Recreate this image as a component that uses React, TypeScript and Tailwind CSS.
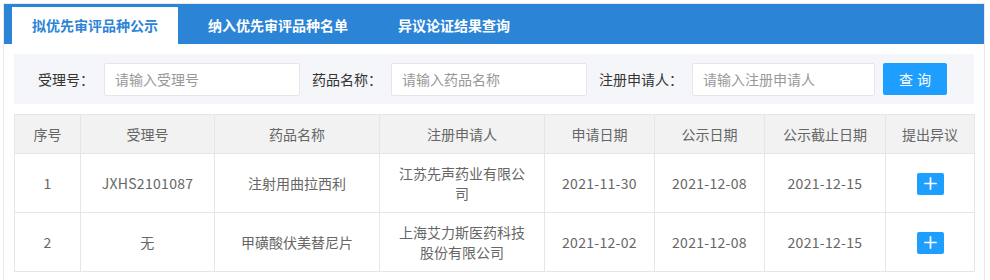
import { Plus } from "lucide-react";

const tabs = ["拟优先审评品种公示", "纳入优先审评品种名单", "异议论证结果查询"];

const columns = [
    { title: "序号", width: 66 },
    { title: "受理号", width: 134 },
    { title: "药品名称", width: 165 },
    { title: "注册申请人", width: 165 },
    { title: "申请日期", width: 110 },
    { title: "公示日期", width: 110 },
    { title: "公示截止日期", width: 121 },
    { title: "提出异议", width: 89 },
];

const rows = [
    { no: 1, code: "JXHS2101087", name: "注射用曲拉西利", applicant: "江苏先声药业有限公司", applyDate: "2021-11-30", pubDate: "2021-12-08", endDate: "2021-12-15" },
    { no: 2, code: "无", name: "甲磺酸伏美替尼片", applicant: "上海艾力斯医药科技股份有限公司", applyDate: "2021-12-02", pubDate: "2021-12-08", endDate: "2021-12-15" },
];

const App = () => {
    return (
        <div className="min-h-screen bg-white pl-[3px] pt-[3px]" style={{ fontFamily: '"Noto Sans CJK SC", "Noto Sans", sans-serif' }}>
            <div className="w-[982px] border border-[#e8e8e8] pb-[8px]">
                {/* Tabs */}
                <div className="h-[40px] bg-[#2b84d6] flex items-end pl-[8px] gap-[10px]">
                    {tabs.map((tab, i) => (
                        <div
                            key={tab}
                            className={
                                i === 0
                                    ? "h-[37px] px-5 flex items-center bg-white text-[#2b84d6] text-[14px] font-bold"
                                    : "h-[37px] px-5 flex items-center text-white text-[14px] font-bold"
                            }
                        >
                            {tab}
                        </div>
                    ))}
                </div>

                <div className="px-[10px] pt-[10px]">
                    {/* Filters */}
                    <div className="h-[50px] bg-[#f5f6f9] flex items-center pl-[24px] text-[14px] text-[#333]">
                        <span className="w-[66px]">受理号：</span>
                        <input className="w-[196px] h-[33px] bg-white border border-[#e6e6e6] rounded-[2px] px-[10px] outline-none placeholder:text-[#999]" placeholder="请输入受理号" />
                        <span className="ml-[12px] w-[79px]">药品名称：</span>
                        <input className="w-[196px] h-[33px] bg-white border border-[#e6e6e6] rounded-[2px] px-[10px] outline-none placeholder:text-[#999]" placeholder="请输入药品名称" />
                        <span className="ml-[12px] w-[93px]">注册申请人：</span>
                        <input className="w-[183px] h-[33px] bg-white border border-[#e6e6e6] rounded-[2px] px-[10px] outline-none placeholder:text-[#999]" placeholder="请输入注册申请人" />
                        <button className="ml-[8px] w-[64px] h-[32px] bg-[#1e9fff] text-white rounded-[2px] text-[14px] tracking-[4px] pl-[4px]">查询</button>
                    </div>

                    {/* Table */}
                    <table className="mt-[10px] w-[960px] table-fixed border-collapse text-[14px] text-[#666] leading-[20px]">
                        <colgroup>
                            {columns.map((c) => (
                                <col key={c.title} style={{ width: c.width }} />
                            ))}
                        </colgroup>
                        <thead>
                            <tr className="bg-[#f2f2f2]">
                                {columns.map((c) => (
                                    <th key={c.title} className="border border-[#e6e6e6] px-[15px] py-[9px] font-normal text-center">
                                        {c.title}
                                    </th>
                                ))}
                            </tr>
                        </thead>
                        <tbody>
                            {rows.map((r) => (
                                <tr key={r.no} className="h-[59px]">
                                    <td className="border border-[#e6e6e6] px-[15px] py-[9px] text-center">{r.no}</td>
                                    <td className="border border-[#e6e6e6] px-[15px] py-[9px] text-center tracking-[0.3px]">{r.code}</td>
                                    <td className="border border-[#e6e6e6] px-[15px] py-[9px] text-center">{r.name}</td>
                                    <td className="border border-[#e6e6e6] px-[15px] py-[9px] text-center">{r.applicant}</td>
                                    <td className="border border-[#e6e6e6] px-[15px] py-[9px] text-center tracking-[0.3px]">{r.applyDate}</td>
                                    <td className="border border-[#e6e6e6] px-[15px] py-[9px] text-center tracking-[0.3px]">{r.pubDate}</td>
                                    <td className="border border-[#e6e6e6] px-[15px] py-[9px] text-center tracking-[0.3px]">{r.endDate}</td>
                                    <td className="border border-[#e6e6e6] px-[15px] py-[9px] text-center">
                                        <button className="inline-flex items-center justify-center w-[27px] h-[22px] bg-[#1e9fff] rounded-[2px] align-middle">
                                            <Plus className="w-[19px] h-[19px] text-white" strokeWidth={2.2} />
                                        </button>
                                    </td>
                                </tr>
                            ))}
                        </tbody>
                    </table>
                </div>
            </div>
        </div>
    );
};

export default App;
